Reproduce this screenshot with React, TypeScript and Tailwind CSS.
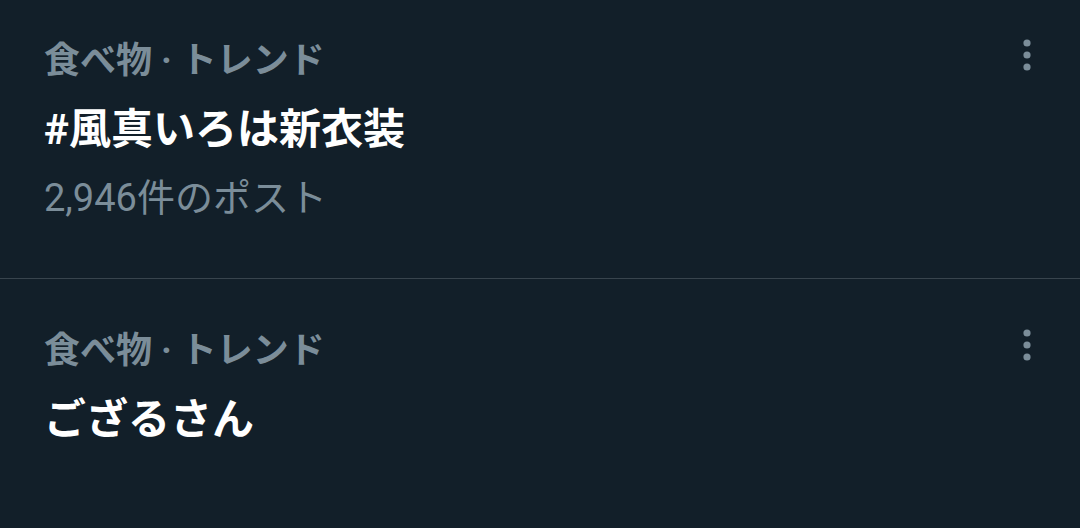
import React from 'react';

interface Trend {
  id: number;
  category: string;
  title: string;
  count?: string;
}

const trends: Trend[] = [
  { id: 1, category: '食べ物 · トレンド', title: '#風真いろは新衣装', count: '2,946件のポスト' },
  { id: 2, category: '食べ物 · トレンド', title: 'ござるさん' },
];

const MoreIcon = () => (
  <svg width="10" height="34" viewBox="0 0 10 34" fill="#7b8d99">
    <circle cx="5" cy="5" r="3.6" />
    <circle cx="5" cy="17" r="3.6" />
    <circle cx="5" cy="29" r="3.6" />
  </svg>
);

const TrendRow: React.FC<{ trend: Trend; last?: boolean }> = ({ trend, last }) => (
  <div className={`flex justify-between pl-[44px] pr-[48px] pt-[48px] ${last ? 'h-[249px]' : 'h-[290px] border-b border-[#38444d]'}`}>
    <div className="flex flex-col">
      <div className="text-[36px] font-bold text-[#7b8d99] leading-[48px]">{trend.category}</div>
      <div className="text-[42px] font-bold text-white leading-[56px] mt-[17px]">{trend.title}</div>
      {trend.count && (
        <div className="text-[38px] text-[#7b8d99] leading-[48px] mt-[16px]">{trend.count}</div>
      )}
    </div>
    <div className="pt-[1px]">
      <MoreIcon />
    </div>
  </div>
);

export default function App() {
  return (
    <div
      className="w-[1080px] h-[528px] bg-[#121f29] overflow-hidden"
      style={{ fontFamily: 'Roboto, "Noto Sans CJK JP", sans-serif' }}
    >
      {/* list is scrolled a little */}
      <div className="-mt-[11px]">
        {trends.map((t, i) => (
          <TrendRow key={t.id} trend={t} last={i === trends.length - 1} />
        ))}
      </div>
    </div>
  );
}
